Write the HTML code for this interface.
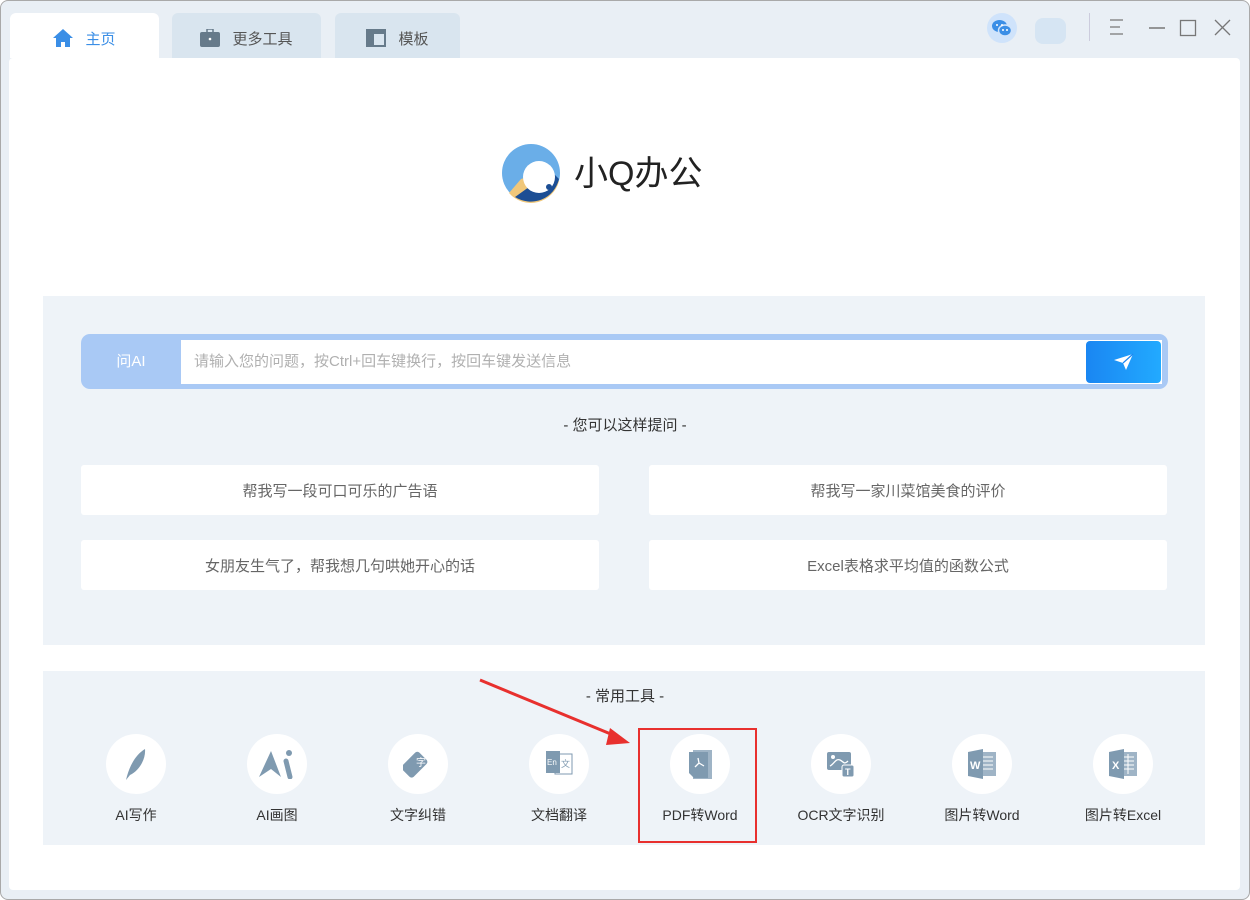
<!DOCTYPE html>
<html><head><meta charset="utf-8"><style>
*{margin:0;padding:0;box-sizing:border-box}
body{width:1250px;height:900px;background:#fff;font-family:"Liberation Sans","Noto Sans CJK SC",sans-serif;position:relative;overflow:hidden}
.frame{position:absolute;left:0;top:0;width:1250px;height:900px;background:#e9eff5;border:1px solid #a9a9a9;border-radius:8px}
.content{position:absolute;left:9px;top:58px;width:1231px;height:832px;background:#fff;border-radius:4px}
.tab{position:absolute;top:13px;height:45px;padding-top:5px;border-radius:6px 6px 0 0;font-size:15px;display:flex;align-items:center;justify-content:center;gap:12px}
.panel{position:absolute;left:43px;width:1162px;background:#eef3f8}
.card{position:absolute;width:518px;height:50px;background:#fff;border-radius:3px;color:#666;font-size:15px;display:flex;align-items:center;justify-content:center}
.tool{position:absolute;top:734px;width:120px;text-align:center;font-size:14px;color:#333}
.circ{width:60px;height:60px;border-radius:50%;background:#fff;margin:0 auto 11px;display:flex;align-items:center;justify-content:center}
</style></head><body>
<div class="frame"></div>
<div class="content"></div>
<div class="tab" style="left:10px;width:149px;background:#fff;color:#3a8ee6"><svg width="20" height="18" viewBox="0 0 20 18"><path d="M10 0L0 9h3v9h5v-5h4v5h5V9h3z" fill="#3a8ee6"/></svg>主页</div>
<div class="tab" style="left:172px;width:149px;background:#d9e5ef;color:#555"><svg width="20" height="18" viewBox="0 0 20 18"><rect x="0" y="3" width="20" height="15" rx="2" fill="#667a8a"/><rect x="7" y="0" width="6" height="4" fill="none" stroke="#667a8a" stroke-width="1.5"/><circle cx="10" cy="10" r="1.3" fill="#fff"/></svg>更多工具</div>
<div class="tab" style="left:335px;width:125px;background:#d9e5ef;color:#555"><svg width="20" height="18" viewBox="0 0 20 18"><path d="M0 0h20v18H0z" fill="#667a8a"/><path d="M2 5h16v11H8V5" fill="#d9e5ef"/><path d="M6 5h2v11H6z" fill="#667a8a"/></svg>模板</div>
<div style="position:absolute;left:987px;top:13px;width:30px;height:30px;border-radius:50%;background:#cfe3fb;text-align:center;padding-top:5px">
<svg width="22" height="20" viewBox="0 0 22 20"><ellipse cx="8.5" cy="8" rx="7.5" ry="6" fill="#3a8ee6"/><ellipse cx="14" cy="12.5" rx="6.5" ry="5.5" fill="#3a8ee6" stroke="#cfe3fb" stroke-width="1.5"/><circle cx="6" cy="7" r="1" fill="#fff"/><circle cx="11" cy="7" r="1" fill="#fff"/><circle cx="12" cy="12" r="1" fill="#fff"/><circle cx="16" cy="12" r="1" fill="#fff"/></svg></div>
<div style="position:absolute;left:1035px;top:18px;width:31px;height:26px;border-radius:8px;background:#d6e5f3"></div>
<div style="position:absolute;left:1089px;top:13px;width:1px;height:28px;background:#ccd"></div>
<svg style="position:absolute;left:1105px;top:17px" width="130" height="22" viewBox="0 0 130 22"><path d="M5 3h13M5 10h10M5 17h13" stroke="#777" stroke-width="1.2"/><path d="M44 11h16" stroke="#777" stroke-width="1.5"/><rect x="75.5" y="3.5" width="15" height="15" fill="none" stroke="#777" stroke-width="1.3"/><path d="M110 3l15 15M125 3l-15 15" stroke="#777" stroke-width="1.3"/></svg>
<!-- logo -->
<svg style="position:absolute;left:501px;top:143px" width="60" height="60" viewBox="0 0 60 60"><circle cx="30" cy="30" r="29" fill="#6aaee8"/><path d="M8 50A29 29 0 0 0 58 38L44 28 20 36z" fill="#f0c77a"/><path d="M14 54A29 29 0 0 0 58 36L48 26 28 44z" fill="#1c4e94"/><circle cx="38" cy="34" r="16" fill="#fff"/><circle cx="48" cy="44" r="3" fill="#1c4e94"/></svg>
<div style="position:absolute;left:574px;top:152px;font-size:34px;color:#222;line-height:44px">小Q办公</div>
<div class="panel" style="top:296px;height:349px"></div>
<div style="position:absolute;left:81px;top:334px;width:1087px;height:55px;border-radius:9px;background:#a9c9f5"></div>
<div style="position:absolute;left:81px;top:334px;width:100px;height:55px;line-height:55px;text-align:center;color:#fff;font-size:15px">问AI</div>
<div style="position:absolute;left:181px;top:340px;width:981px;height:44px;background:#fff;color:#b0b0b0;font-size:15px;line-height:44px;padding-left:13px">请输入您的问题，按Ctrl+回车键换行，按回车键发送信息</div>
<div style="position:absolute;left:1086px;top:341px;width:75px;height:42px;border-radius:4px;background:linear-gradient(90deg,#1a86f2,#22aaff)"><svg style="position:absolute;left:28px;top:12px" width="20" height="18" viewBox="0 0 20 18"><path d="M0 7L19 1 12 17 9 10z" fill="#fff"/><path d="M9 10L19 1" stroke="#1a86f2" stroke-width="1.2"/></svg></div>
<div style="position:absolute;left:0;width:1250px;top:414px;text-align:center;font-size:15px;color:#333">- 您可以这样提问 -</div>
<div class="card" style="left:81px;top:465px">帮我写一段可口可乐的广告语</div>
<div class="card" style="left:649px;top:465px">帮我写一家川菜馆美食的评价</div>
<div class="card" style="left:81px;top:540px">女朋友生气了，帮我想几句哄她开心的话</div>
<div class="card" style="left:649px;top:540px">Excel表格求平均值的函数公式</div>
<div class="panel" style="top:671px;height:174px"></div>
<div style="position:absolute;left:0;width:1250px;top:685px;text-align:center;font-size:15px;color:#333">- 常用工具 -</div>
<div class="tool" style="left:76px"><div class="circ"><svg width="30" height="34" viewBox="0 0 30 34"><path d="M5 33C8 20 14 8 24 2c1 10-6 22-15 26z" fill="#7f9ab0"/></svg></div>AI写作</div>
<div class="tool" style="left:217px"><div class="circ"><svg width="36" height="30" viewBox="0 0 36 30"><path d="M12 2L0 28l12-8 10 8z" fill="#7f9ab0"/><circle cx="30" cy="4" r="3" fill="#7f9ab0"/><path d="M27 12l4 16" stroke="#7f9ab0" stroke-width="5" stroke-linecap="round"/></svg></div>AI画图</div>
<div class="tool" style="left:358px"><div class="circ"><svg width="30" height="30" viewBox="0 0 30 30"><rect x="5" y="6" width="16" height="24" rx="3" transform="rotate(45 15 15)" fill="#7f9ab0"/><text x="13" y="17" font-size="10" fill="#fff" font-family="Noto Sans CJK SC">字</text></svg></div>文字纠错</div>
<div class="tool" style="left:499px"><div class="circ"><svg width="30" height="30" viewBox="0 0 30 30"><rect x="11" y="5" width="17" height="20" fill="#fff" stroke="#7f9ab0"/><rect x="2" y="2" width="14" height="22" fill="#7f9ab0"/><text x="3" y="16" font-size="8" fill="#fff">En</text><text x="17" y="18" font-size="9" fill="#7f9ab0" font-family="Noto Sans CJK SC">文</text></svg></div>文档翻译</div>
<div class="tool" style="left:640px"><div class="circ"><svg width="26" height="30" viewBox="0 0 26 30"><path d="M6 1h19v29H6z" fill="#9fb4c6"/><path d="M2 3h19v26H7l-5-5z" fill="#7f9ab0"/><path d="M11 9l1 5-4 4M12 14l5 3" stroke="#fff" stroke-width="1.3" fill="none"/></svg></div>PDF转Word</div>
<div class="tool" style="left:781px"><div class="circ"><svg width="32" height="30" viewBox="0 0 32 30"><rect x="2" y="3" width="24" height="18" rx="2" fill="#7f9ab0"/><path d="M5 17c4-2 6-8 10-6s4 5 8 1" stroke="#fff" fill="none" stroke-width="1.3"/><circle cx="8" cy="8" r="2" fill="#fff"/><rect x="17" y="16" width="12" height="12" rx="2" fill="#7f9ab0" stroke="#fff"/><text x="20" y="26" font-size="9" fill="#fff" font-weight="bold">T</text></svg></div>OCR文字识别</div>
<div class="tool" style="left:922px"><div class="circ"><svg width="32" height="32" viewBox="0 0 32 32"><rect x="12" y="4" width="18" height="24" fill="#9fb4c6"/><path d="M15 9h12M15 13h12M15 17h12M15 21h12" stroke="#fff"/><path d="M2 4l15-3v30L2 28z" fill="#7f9ab0"/><text x="4" y="21" font-size="11" fill="#fff" font-weight="bold">W</text></svg></div>图片转Word</div>
<div class="tool" style="left:1063px"><div class="circ"><svg width="32" height="32" viewBox="0 0 32 32"><rect x="12" y="4" width="18" height="24" fill="#9fb4c6"/><path d="M15 9h12M15 13h12M15 17h12M15 21h12M21 6v20" stroke="#fff"/><path d="M2 4l15-3v30L2 28z" fill="#7f9ab0"/><text x="5" y="21" font-size="11" fill="#fff" font-weight="bold">X</text></svg></div>图片转Excel</div>
<div style="position:absolute;left:638px;top:728px;width:119px;height:115px;border:2px solid #e8302e"></div>
<svg style="position:absolute;left:470px;top:670px" width="170" height="80" viewBox="0 0 170 80"><path d="M10 10L148 67" stroke="#e8302e" stroke-width="3"/><path d="M160 73L140 58 136 75z" fill="#e8302e"/></svg>
</body></html>
